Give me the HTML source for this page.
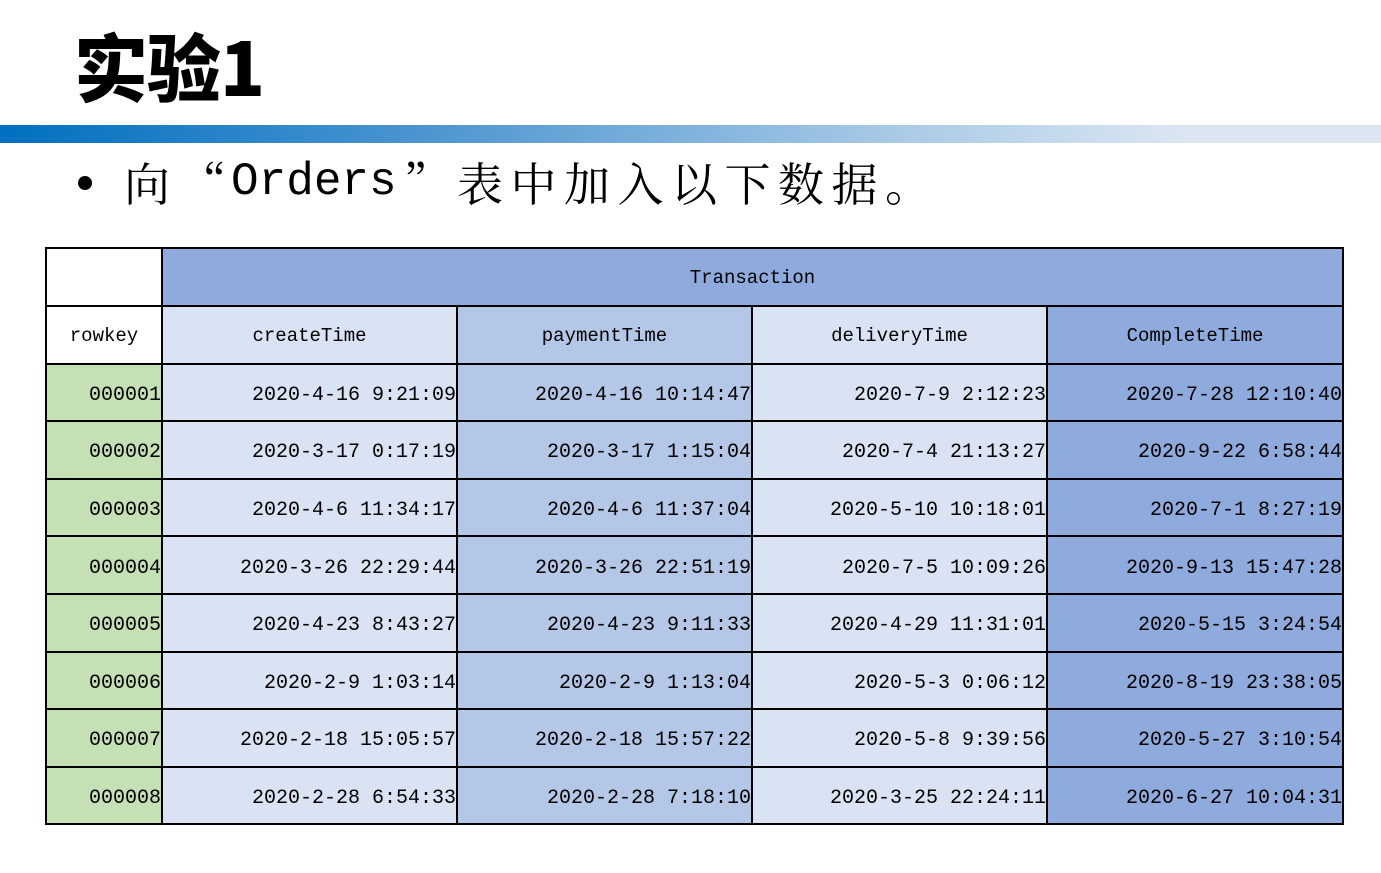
<!DOCTYPE html>
<html><head><meta charset="utf-8"><style>
body{margin:0;width:1381px;height:873px;background:#fff;position:relative;overflow:hidden;font-family:"Liberation Sans","Noto Sans CJK SC",sans-serif}
.t{position:absolute;left:74px;top:20px;font-size:74px;font-weight:900;font-family:"Noto Sans CJK SC",sans-serif;letter-spacing:-1px;line-height:90px;color:#000}
.bar{position:absolute;left:0;top:125px;width:1381px;height:18px;background:linear-gradient(90deg,#0070c0 0%,#4a94d0 30%,#a9cae6 65%,#dce6f2 86%,#dce6f2 100%)}
.s{position:absolute;top:152px;font-size:46px;line-height:60px;font-family:"Noto Serif CJK SC",serif;color:#000;white-space:nowrap}
.m{font-family:"Liberation Mono",monospace}
.dot{position:absolute;left:78px;top:176px;width:14px;height:14px;border-radius:50%;background:#000}
table{position:absolute;left:45px;top:247px;border-collapse:collapse;font-family:"Liberation Mono",monospace;font-size:20px;color:#000}
td{border:2px solid #000;height:57.6px;padding:0;text-align:right;vertical-align:middle;padding-top:6px;box-sizing:border-box}
td.h{text-align:center;font-size:19px;padding-top:2px}
.g{background:#c5e0b4}.a{background:#dae3f3}.b{background:#b4c7e7}.c{background:#8faadc}
</style></head><body>
<div class="t">实验1</div>
<div class="bar"></div>
<div class="dot"></div>
<div class="s" style="left:124px">向</div>
<div class="s" style="left:180px">“</div>
<div class="s m" style="left:231px;font-size:46px">Orders</div>
<div class="s" style="left:404px">”</div>
<div class="s" style="left:457px;letter-spacing:7.5px">表中加入以下数据。</div>
<table>
<colgroup><col style="width:116px"><col style="width:295px"><col style="width:295px"><col style="width:295px"><col style="width:296px"></colgroup>
<tr><td style="background:#fff;height:58px"></td><td class="h c" colspan="4" style="height:58px">Transaction</td></tr>
<tr><td class="h" style="background:#fff">rowkey</td><td class="h a">createTime</td><td class="h b">paymentTime</td><td class="h a">deliveryTime</td><td class="h c">CompleteTime</td></tr>
<tr><td class="g">000001</td><td class="a">2020-4-16 9:21:09</td><td class="b">2020-4-16 10:14:47</td><td class="a">2020-7-9 2:12:23</td><td class="c">2020-7-28 12:10:40</td></tr>
<tr><td class="g">000002</td><td class="a">2020-3-17 0:17:19</td><td class="b">2020-3-17 1:15:04</td><td class="a">2020-7-4 21:13:27</td><td class="c">2020-9-22 6:58:44</td></tr>
<tr><td class="g">000003</td><td class="a">2020-4-6 11:34:17</td><td class="b">2020-4-6 11:37:04</td><td class="a">2020-5-10 10:18:01</td><td class="c">2020-7-1 8:27:19</td></tr>
<tr><td class="g">000004</td><td class="a">2020-3-26 22:29:44</td><td class="b">2020-3-26 22:51:19</td><td class="a">2020-7-5 10:09:26</td><td class="c">2020-9-13 15:47:28</td></tr>
<tr><td class="g">000005</td><td class="a">2020-4-23 8:43:27</td><td class="b">2020-4-23 9:11:33</td><td class="a">2020-4-29 11:31:01</td><td class="c">2020-5-15 3:24:54</td></tr>
<tr><td class="g">000006</td><td class="a">2020-2-9 1:03:14</td><td class="b">2020-2-9 1:13:04</td><td class="a">2020-5-3 0:06:12</td><td class="c">2020-8-19 23:38:05</td></tr>
<tr><td class="g">000007</td><td class="a">2020-2-18 15:05:57</td><td class="b">2020-2-18 15:57:22</td><td class="a">2020-5-8 9:39:56</td><td class="c">2020-5-27 3:10:54</td></tr>
<tr><td class="g">000008</td><td class="a">2020-2-28 6:54:33</td><td class="b">2020-2-28 7:18:10</td><td class="a">2020-3-25 22:24:11</td><td class="c">2020-6-27 10:04:31</td></tr>
</table>
</body></html>
